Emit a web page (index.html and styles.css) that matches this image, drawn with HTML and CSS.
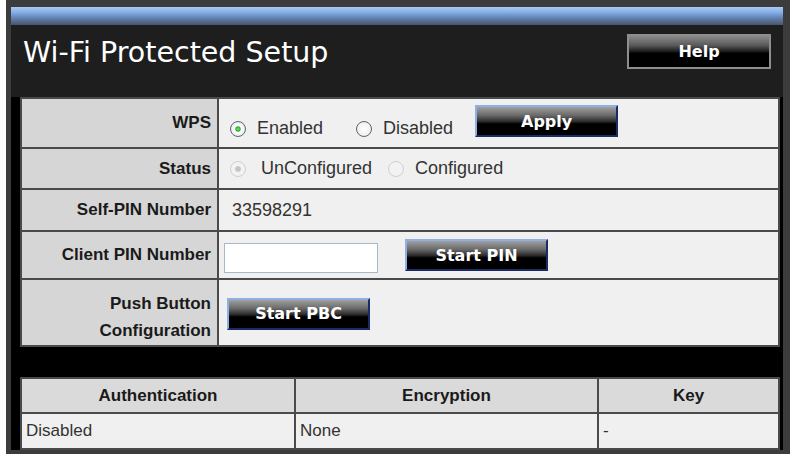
FILE: index.html
```html
<!DOCTYPE html>
<html lang="en">

<head>
    <meta charset="UTF-8">
    <title>Wi-Fi Protected Setup</title>
    <link rel="stylesheet" href="styles.css">
</head>

<body>
    <div class="frame">
        <div class="topbar"></div>

        <div class="head">
            <div class="title">Wi-Fi Protected Setup</div>
            <input type="button" value="Help" class="help">
        </div>

        <div class="content">
            <table class="form">
                <tr class="r-wps">
                    <td class="label">WPS</td>
                    <td class="value">
                        <div class="line">
                            <label class="opt opt-en"><input type="radio" name="wps" class="radio" checked> Enabled</label>
                            <label class="opt opt-dis"><input type="radio" name="wps" class="radio"> Disabled</label>
                            <input type="button" value="Apply" class="btn btn-apply">
                        </div>
                    </td>
                </tr>
                <tr class="r-status">
                    <td class="label">Status</td>
                    <td class="value">
                        <div class="line">
                            <label class="opt opt-unc"><input type="radio" name="st" class="radio" checked disabled> UnConfigured</label>
                            <label class="opt"><input type="radio" name="st" class="radio" disabled> Configured</label>
                        </div>
                    </td>
                </tr>
                <tr class="r-pin">
                    <td class="label">Self-PIN Number</td>
                    <td class="value"><span class="pin">33598291</span></td>
                </tr>
                <tr class="r-client">
                    <td class="label">Client PIN Number</td>
                    <td class="value">
                        <div class="line">
                            <input type="text" class="pinbox">
                            <input type="button" value="Start PIN" class="btn btn-pin">
                        </div>
                    </td>
                </tr>
                <tr class="r-pbc">
                    <td class="label label2">Push Button<br>Configuration</td>
                    <td class="value">
                        <div class="line">
                            <input type="button" value="Start PBC" class="btn btn-pbc">
                        </div>
                    </td>
                </tr>
            </table>

            <table class="list">
                <tr class="r-head">
                    <th class="c1">Authentication</th>
                    <th class="c2">Encryption</th>
                    <th class="c3">Key</th>
                </tr>
                <tr class="r-data">
                    <td>Disabled</td>
                    <td>None</td>
                    <td>-</td>
                </tr>
            </table>
        </div>
    </div>
</body>

</html>
```

FILE: styles.css
```css
body {
    margin: 0;
    background-color: #ffffff;
    font-family: "Liberation Sans", Arial, sans-serif;
}

.frame {
    margin-left: 6px;
    width: 772px;
    padding: 7px 7px 4px 5px;
    background-color: #3c3c3c;
}

.topbar {
    height: 18px;
    background: linear-gradient(#a9cbf4 0%, #84aee6 30%, #6283b3 60%, #47556a 100%);
}

.head {
    height: 72px;
    background-color: #1e1e1e;
    display: flex;
    justify-content: space-between;
    align-items: flex-start;
    padding: 0 12px;
}

.title {
    margin-top: 11px;
    color: #ffffff;
    font-family: "DejaVu Sans", Verdana, sans-serif;
    font-size: 28.5px;
    line-height: 34px;
}

.help {
    margin-top: 9px;
    width: 144px;
    height: 35px;
    border: 2px solid #8e8e8e;
    background: linear-gradient(#8a8a8a 0%, #5a5a5a 30%, #1a1a1a 50%, #000000 56%, #000000 100%);
    color: #ffffff;
    font-family: "DejaVu Sans", Verdana, sans-serif;
    font-weight: bold;
    font-size: 16px;
    padding: 0;
}

.content {
    background-color: #000000;
    padding: 0 3px 0 9px;
}

/* form table */

.form,
.list {
    width: 760px;
    border-collapse: separate;
    border-spacing: 2px;
    background-color: #4a4a4a;
    table-layout: fixed;
}

.form td {
    padding: 0;
}

.label {
    width: 183px;
    padding: 0 6px !important;
    background-color: #d6d6d6;
    color: #1a1a1a;
    font-weight: bold;
    font-size: 17px;
    text-align: right;
}

.label2 {
    line-height: 27px;
    padding-top: 9px !important;
}

.value {
    background-color: #f0f0f0;
    color: #333333;
    font-size: 18px;
    padding-left: 11px !important;
}

.r-wps { height: 48px; }
.r-status { height: 39px; }
.r-pin { height: 40px; }
.r-client { height: 46px; }
.r-pbc { height: 65px; }

.line {
    display: flex;
    align-items: center;
}

.opt {
    display: flex;
    align-items: center;
}

.opt-en,
.opt-dis {
    margin-top: 11px;
}

.opt-en {
    margin-right: 33px;
}

.opt-dis {
    margin-right: 22px;
}

.opt-unc {
    margin-right: 16px;
}

.radio {
    appearance: none;
    -webkit-appearance: none;
    width: 16px;
    height: 16px;
    margin: 0 11px 0 0;
    border: 1px solid #5d6670;
    border-radius: 50%;
    background: radial-gradient(circle, #ffffff 0%, #f4f4f4 55%, #d8dde2 100%);
}

.radio:checked {
    background: radial-gradient(circle, #7fe07a 0%, #2fae2f 22%, #ffffff 34%, #eef0f2 60%, #d8dde2 100%);
}

.radio:disabled {
    border-color: #cfcfcf;
    background: #f2f2f2;
}

.radio:disabled:checked {
    background: radial-gradient(circle, #c4c4c4 0%, #c4c4c4 24%, #f2f2f2 34%);
}

.opt-unc .radio {
    margin-right: 15px;
}

.pin {
    margin-left: 2px;
}

.pinbox {
    width: 154px;
    height: 30px;
    box-sizing: border-box;
    margin: 6px 27px 0 -6px;
    border: 1px solid #a9b8c9;
    background-color: #ffffff;
}

.btn {
    width: 143px;
    height: 32px;
    padding: 0;
    border: 2px solid;
    border-color: #8eb0e4 #1a2b66 #1a2b66 #8eb0e4;
    background: linear-gradient(#a0a0a0 0%, #6a6a6a 30%, #2a2a2a 52%, #000000 60%, #000000 100%);
    color: #ffffff;
    font-family: "DejaVu Sans", Verdana, sans-serif;
    font-weight: bold;
    font-size: 16px;
}

.btn-apply {
    margin-top: -4px;
}

.btn-pbc {
    margin-left: -3px;
    margin-top: 2px;
}

/* status list */

.list {
    margin-top: 30px;
}

.list th,
.list td {
    padding: 0 4px;
}

.list .c1 { width: 264px; }
.list .c2 { width: 293px; }
.list .c3 { width: 171px; }

.r-head {
    height: 33px;
}

.r-head th {
    background-color: #dadada;
    color: #1a1a1a;
    font-size: 17px;
}

.r-data {
    height: 34px;
}

.r-data td {
    background-color: #f0f0f0;
    color: #333333;
    font-size: 17px;
}
```
